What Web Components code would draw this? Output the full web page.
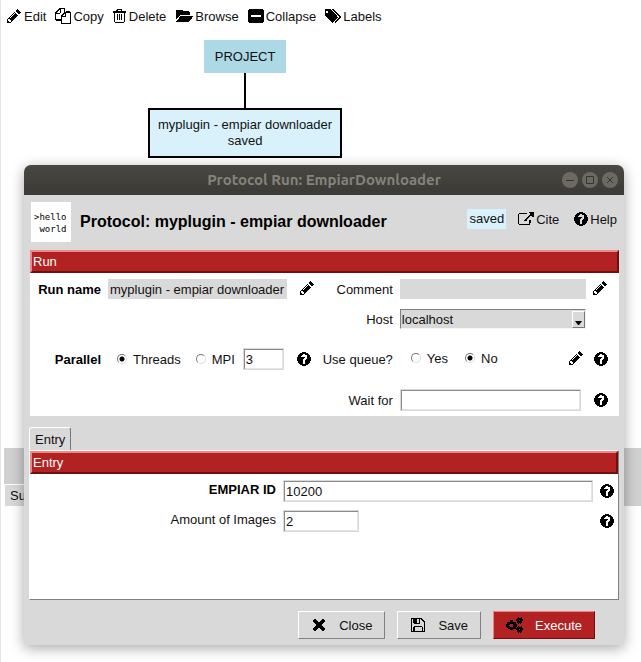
<!DOCTYPE html>
<html lang="en">
<head>
<meta charset="utf-8">
<title>Protocol Run: EmpiarDownloader</title>
<style>
html,body{margin:0;height:100%}
body{font:13px/15px "Liberation Sans",Arial,sans-serif;color:#111;background:#fff;overflow:hidden}
</style>
</head>
<body>
<project-page></project-page>
<script>
const PATHS = {
pencil:['0 0 1792 1792','M491 1536l91-91-235-235-91 91v107h128v128h107zm523-928q0-22-22-22-10 0-17 7l-542 542q-7 7-7 17 0 22 22 22 10 0 17-7l542-542q7-7 7-17zm-54-192l416 416-832 832h-416v-416zm683 96q0 53-37 90l-166 166-416-416 166-165q36-38 90-38 53 0 91 38l235 234q37 39 37 91z'],
help:['128 128 1536 1536','M1024 1376v-192q0-14-9-23t-23-9h-192q-14 0-23 9t-9 23v192q0 14 9 23t23 9h192q14 0 23-9t9-23zm256-672q0-88-55.500-163t-138.500-116-170-41q-243 0-371 213-15 24 8 42l132 100q7 6 19 6 16 0 25-12 53-68 86-92 34-24 86-24 48 0 85.500 26t37.500 59q0 38-20 61t-68 45q-63 28-115.500 86.500t-52.500 125.500v36q0 14 9 23t23 9h192q14 0 23-9t9-23q0-19 21.500-49.500t54.500-49.500q32-18 49-28.500t46-35 44.500-48 28-60.500 12.500-81zm384 192q0 209-103 385.500t-279.500 279.500-385.500 103-385.500-103-279.500-279.500-103-385.500 103-385.500 279.500-279.500 385.500-103 385.500 103 279.500 279.500 103 385.500z'],
link:['0 64 1792 1536','M1408 928v320q0 119-84.500 203.500t-203.500 84.500h-832q-119 0-203.500-84.500t-84.500-203.500v-832q0-119 84.500-203.500t203.500-84.500h704q14 0 23 9t9 23v64q0 14-9 23t-23 9h-704q-66 0-113 47t-47 113v832q0 66 47 113t113 47h832q66 0 113-47t47-113v-320q0-14 9-23t23-9h64q14 0 23 9t9 23zm384-864v512q0 26-19 45t-45 19-45-19l-176-176-652 652q-10 10-23 10t-23-10l-114-114q-10-10-10-23t10-23l652-652-176-176q-19-19-19-45t19-45 45-19h512q26 0 45 19t19 45z'],
copy:['0 0 1792 1792','M1696 384q40 0 68 28t28 68v1216q0 40-28 68t-68 28h-960q-40 0-68-28t-28-68v-288h-544q-40 0-68-28t-28-68v-672q0-40 20-88t48-76l408-408q28-28 76-48t88-20h416q40 0 68 28t28 68v328q68-40 128-40h416zm-544 213l-299 299h299v-299zm-640-384l-299 299h299v-299zm196 647l316-316v-416h-384v416q0 40-28 68t-68 28h-416v640h512v-256q0-40 20-88t48-76zm956 804v-1152h-384v416q0 40-28 68t-68 28h-416v640h896z'],
trash:['192 128 1408 1536','M704 736v576q0 14-9 23t-23 9h-64q-14 0-23-9t-9-23v-576q0-14 9-23t23-9h64q14 0 23 9t9 23zm256 0v576q0 14-9 23t-23 9h-64q-14 0-23-9t-9-23v-576q0-14 9-23t23-9h64q14 0 23 9t9 23zm256 0v576q0 14-9 23t-23 9h-64q-14 0-23-9t-9-23v-576q0-14 9-23t23-9h64q14 0 23 9t9 23zm128 724v-948h-896v948q0 22 7 40.500t14.500 27 10.500 8.500h832q3 0 10.500-8.500t14.500-27 7-40.500zm-672-1076h448l-48-117q-7-9-17-11h-317q-10 2-17 11zm928 32v64q0 14-9 23t-23 9h-96v948q0 83-47 143.500t-113 60.500h-832q-66 0-113-58.500t-47-141.500v-952h-96q-14 0-23-9t-9-23v-64q0-14 9-23t23-9h309l70-167q15-37 54-63t79-26h320q40 0 79 26t54 63l70 167h309q14 0 23 9t9 23z'],
folder:['0 256 1943 1280','M1943 952q0 31-31 66l-336 396q-43 51-120.500 86.500t-143.500 35.500h-1088q-34 0-60.500-13t-26.500-43q0-31 31-66l336-396q43-51 120.500-86.500t143.500-35.500h1088q34 0 60.500 13t26.500 43zm-343-344v160h-832q-94 0-197 47.500t-164 119.500l-337 396-5 6v-985q0-92 66-158t158-66h320q92 0 158 66t66 158v32h544q92 0 158 66t66 158z'],
minus:['0 0 16 15','M2 0H14L16 2V13L14 15H2L0 13V2ZM3 6V9H13V6Z'],
tags:['0 128 1835 1536','M384 448q0-53-37.500-90.500t-90.500-37.500-90.500 37.500-37.500 90.500 37.500 90.500 90.500 37.500 90.500-37.500 37.500-90.500zm1067 576q0 53-37 90l-491 492q-39 37-91 37-53 0-90-37l-715-716q-38-37-64.500-101t-26.500-117v-416q0-52 38-90t90-38h416q53 0 117 26.500t102 64.500l715 714q37 39 37 91zm384 0q0 53-37 90l-491 492q-39 37-91 37-36 0-59-14t-53-45l470-470q37-37 37-90 0-52-37-91l-715-714q-38-38-102-64.500t-117-26.500h224q53 0 117 26.500t102 64.500l715 714q37 39 37 91z'],
save:['128 128 1536 1536','M512 1536h768v-384h-768v384zm896 0h128v-896q0-14-10-38.500t-20-34.500l-281-281q-10-10-34-20t-39-10v416q0 40-28 68t-68 28h-576q-40 0-68-28t-28-68v-416h-128v1280h128v-416q0-40 28-68t68-28h832q40 0 68 28t28 68v416zm-384-928v-320q0-13-9.500-22.500t-22.500-9.500h-192q-13 0-22.500 9.500t-9.500 22.500v320q0 13 9.500 22.500t22.500 9.500h192q13 0 22.500-9.500t9.500-22.500zm640 32v928q0 40-28 68t-68 28h-1344q-40 0-68-28t-28-68v-1344q0-40 28-68t68-28h928q40 0 88 20t76 48l280 280q28 28 48 76t20 88z'],
times:['302 366 1188 1188','M1490 1322q0 40-28 68l-136 136q-28 28-68 28t-68-28l-294-294-294 294q-28 28-68 28t-68-28l-136-136q-28-28-28-68t28-68l294-294-294-294q-28-28-28-68t28-68l136-136q28-28 68-28t68 28l294 294 294-294q28-28 68-28t68 28l136 136q28 28 28 68t-28 68l-294 294 294 294q28 28 28 68z'],
cogs:['0 0 17 16','M4 3H7V5H9L10 6V7H11V10H10V11L9 12H7V13H4V12H2L1 11V10H0V7H1V5H4ZM4 7L3 8V9L4 10H6L7 9V8L6 7ZM12 0H13V1H15V0H16V2H17V4H16V6H15V7H14V6H13V7H12V6H11V4H10V2H11V1H12ZM13 3V4H14V3ZM12 9H13V10H15V9H16V11H17V13H16V15H15V16H14V15H13V16H12V15H11V13H10V11H11V10H12ZM13 12V13H14V12Z']
};
function component(name, html, setup){
  customElements.define(name, class extends HTMLElement{
    constructor(){
      super();
      const t=document.createElement('template');
      t.innerHTML='<style>*{box-sizing:border-box}button,input,select{font:inherit;color:inherit;margin:0}</style>'+html;
      this.attachShadow({mode:'open'}).append(t.content.cloneNode(true));
    }
    connectedCallback(){ if(setup) setup(this,this.shadowRoot); }
  });
}

component('ui-icon',`<style>
:host{display:inline-flex;flex:none;width:14px;height:14px;color:#000}
:host([name=pencil]){width:16px;height:16px}
svg{width:100%;height:100%;display:block;shape-rendering:crispEdges}
</style><svg aria-hidden="true" preserveAspectRatio="none"><path fill="currentColor" fill-rule="evenodd"/></svg>`,
(el,root)=>{
  const [box,d]=PATHS[el.getAttribute('name')];
  root.querySelector('svg').setAttribute('viewBox',box);
  root.querySelector('path').setAttribute('d',d);
});

component('icon-button',`<style>
:host{display:inline-flex}
button{display:flex;align-items:center;gap:2px;padding:0;border:0;background:none;white-space:nowrap}
</style><button type="button"><slot name="icon"></slot><slot></slot></button>`,
(el,root)=>{const l=el.getAttribute('label'); if(l) root.querySelector('button').setAttribute('aria-label',l);});

component('tool-bar',`<style>
:host{display:flex;align-items:center;gap:9px;padding:8px 5px 0;height:24px;box-sizing:border-box}
.copy{width:16px;height:16px}.trash{width:13px;margin-right:1px}.folder{width:18px;height:12px}.wide{width:16px}
</style>
<icon-button><ui-icon slot="icon" name="pencil"></ui-icon>Edit</icon-button>
<icon-button><ui-icon slot="icon" class="copy" name="copy"></ui-icon>Copy</icon-button>
<icon-button><ui-icon slot="icon" class="trash" name="trash"></ui-icon>Delete</icon-button>
<icon-button><ui-icon slot="icon" class="folder" name="folder"></ui-icon>Browse</icon-button>
<icon-button><ui-icon slot="icon" class="wide" name="minus"></ui-icon>Collapse</icon-button>
<icon-button><ui-icon slot="icon" class="wide" name="tags"></ui-icon>Labels</icon-button>`);

component('protocol-graph',`<style>
:host{display:flex;padding:16px 147px}
.tree{display:flex;flex-direction:column;align-items:center;white-space:nowrap;text-align:center}
.root{background:#add8e6;padding:9px 11px;line-height:15px}
.edge{width:2px;height:35px;background:#000}
.node{background:#d9f1fa;border:2px solid #000;padding:7px 8px;line-height:16px}
</style>
<div class="tree"><div class="root">PROJECT</div><div class="edge"></div>
<div class="node">myplugin - empiar downloader<br>saved</div></div>`);

component('title-bar',`<style>
:host{display:grid;grid-template-columns:1fr auto 1fr;align-items:center;height:30px;padding:0 6px;border-radius:7px 7px 0 0;background:linear-gradient(#484741,#3b3a36);color:#85837b;box-sizing:border-box}
.t{grid-column:2;font:bold 15px/20px Ubuntu,"Noto Sans",sans-serif}
.b{justify-self:end;display:flex;gap:4px}
button{width:16px;height:16px;padding:0;border:0;border-radius:50%;background:#6b6962;display:block}
svg{display:block;width:16px;height:16px;fill:none;stroke:#35342f}
</style>
<div class="t"><slot></slot></div>
<div class="b">
<button type="button" aria-label="Minimize"><svg viewBox="0 0 16 16"><path d="M4 8.500H12"/></svg></button>
<button type="button" aria-label="Maximize"><svg viewBox="0 0 16 16"><path d="M4.500 4.500H11.500V11.500H4.500Z"/></svg></button>
<button type="button" aria-label="Close"><svg viewBox="0 0 16 16"><path d="M5 5L11 11M11 5L5 11"/></svg></button>
</div>`);

component('protocol-header',`<style>
:host{display:flex;align-items:center;padding:7px 7px 6px 7px}
.logo{width:40px;height:40px;background:#fff;font:9px/12px "DejaVu Sans Mono",monospace;color:#000;padding:9px 0 0 3px;white-space:pre;flex:none}
h1{font-size:16px;line-height:20px;margin:0 0 0 9px;flex:1;color:#000;white-space:nowrap}
.side{display:flex;gap:12px;align-items:center;padding-bottom:6px}
.saved{background:#d9f1fa;padding:2px;line-height:16px}
.acts{display:flex;gap:15px;align-items:center}
a{color:inherit;text-decoration:none;display:flex;align-items:center;gap:2px}
</style>
<div class="logo">&gt;hello
 world</div>
<h1>Protocol: myplugin - empiar downloader</h1>
<div class="side"><span class="saved">saved</span>
<div class="acts"><a href="#cite"><ui-icon name="link" style="width:16px"></ui-icon>Cite</a><a href="#help"><ui-icon name="help"></ui-icon>Help</a></div></div>`);

component('form-section',`<style>
:host{display:block;background:#fff}
h2{margin:0;font:inherit;line-height:19px;color:#fff;background:#b22222;border:2px solid;border-color:#f08888 #6e1010 #6e1010 #f08888;padding:0 1px}
</style><h2></h2><slot></slot>`,
(el,root)=>{root.querySelector('h2').textContent=el.getAttribute('heading');});

const FIELD=`<style>
input.t{width:100%;height:22px;padding:0 2px;background:#fff;border:1px solid #d9d9d9;border-radius:0;box-shadow:inset 1px 1px #8c8c8c,inset -1px -1px #e4e4e4;outline:0;min-width:0}
input.flat{width:100%;height:20px;padding:0 2px;border:0;border-radius:0;background:#d9d9d9;outline:0;min-width:0}
label.l{text-align:right;white-space:nowrap}
.b{font-weight:bold;color:#000}
</style>`;

component('run-form',FIELD+`<style>
:host{display:grid;grid-template-columns:71px minmax(0,179fr) 28px 78px minmax(0,186fr) 22px;grid-template-rows:30px 30px 50px 32px;align-items:center;column-gap:0;padding:1px 11px 0 0;box-sizing:border-box;height:143px}
.f{margin-left:7px;display:flex;align-items:center}
.ic{display:flex;justify-content:flex-end}
.sel{position:relative}
select{appearance:none;width:100%;height:20px;padding:0 16px 0 1px;border:1px solid;border-color:#808080 #f4f4f4 #f4f4f4 #808080;border-radius:0;background:#d9d9d9;outline:0}
.arrow{position:absolute;right:1px;top:2px;width:13px;height:17px;border:1px solid;border-color:#fff #777 #777 #fff;background:#d9d9d9;pointer-events:none}
.arrow svg{display:block;width:11px;height:15px}
.r{display:flex;align-items:center;gap:6px;white-space:nowrap}
input[type=radio]{appearance:none;width:10px;height:10px;border:1px solid;border-color:#777 #ddd #ddd #777;border-radius:50%;background:#fff}
input[type=radio]:checked{background:radial-gradient(circle,#000 2px,#fff 3px)}
.par{margin-left:16px;margin-right:3px}
.par .r+.r{margin-left:15px}
.par .t{width:41px;margin-left:auto}
.one{padding-right:4px}
.q{margin-left:18px;gap:17px}
.q icon-button{margin-left:auto;margin-right:2px}
.wait{padding-right:5px}
.q,.pen{padding-bottom:2px}
</style>
<label class="l b" for="name">Run name</label><div class="f"><input class="flat" id="name" value="myplugin - empiar downloader"></div>
<div class="ic pen"><icon-button label="Edit run name"><ui-icon slot="icon" name="pencil"></ui-icon></icon-button></div>
<label class="l" for="comment">Comment</label><div class="f"><input class="flat" id="comment"></div>
<div class="ic pen"><icon-button label="Edit comment"><ui-icon slot="icon" name="pencil"></ui-icon></icon-button></div>
<label class="l" for="host" style="grid-column:4">Host</label><div class="f sel"><select id="host"><option>localhost</option></select><span class="arrow"><svg viewBox="0 0 11 15"><path d="M2 9H9L6 13H5Z"/></svg></span></div><span></span>
<span class="l b" style="text-align:right">Parallel</span><div class="f par"><label class="r"><input type="radio" name="par" checked>Threads</label><label class="r"><input type="radio" name="par">MPI</label><input class="t" aria-label="Number of threads" value="3"></div>
<div class="ic one"><icon-button label="Help on parallel"><ui-icon slot="icon" name="help"></ui-icon></icon-button></div>
<span style="text-align:right">Use queue?</span><div class="f q"><label class="r"><input type="radio" name="q">Yes</label><label class="r"><input type="radio" name="q" checked>No</label><icon-button label="Edit queue"><ui-icon slot="icon" name="pencil"></ui-icon></icon-button></div>
<div class="ic"><icon-button label="Help on queue"><ui-icon slot="icon" name="help"></ui-icon></icon-button></div>
<label class="l" for="wait" style="grid-column:4">Wait for</label><div class="f wait"><input class="t" id="wait"></div>
<div class="ic"><icon-button label="Help on wait for"><ui-icon slot="icon" name="help"></ui-icon></icon-button></div>`);

component('entry-form',FIELD+`<style>
:host{display:grid;grid-template-columns:minmax(0,246fr) minmax(0,310fr) 14px;gap:8px 7px;padding:6px 4px 67px 0;align-items:center}
label.l{padding-bottom:4px}
.n{width:76px!important}
</style>
<label class="l b" for="id">EMPIAR ID</label><input class="t" id="id" value="10200"><icon-button label="Help on EMPIAR ID"><ui-icon slot="icon" name="help"></ui-icon></icon-button>
<label class="l" for="amount">Amount of Images</label><input class="t n" id="amount" value="2"><icon-button label="Help on amount of images"><ui-icon slot="icon" name="help"></ui-icon></icon-button>`);

component('tab-panel',`<style>
:host{display:block;padding:11px 5px 0}
button{display:block;height:23px;padding:0 5px;border:1px solid;border-color:#fff #777 transparent #fff;border-bottom:0;border-radius:3px 3px 0 0;background:#d9d9d9}
.body{border:1px solid;border-color:#fff #808080 #808080 #fff;background:#fff}
</style><div role="tablist"><button type="button" role="tab" aria-selected="true">Entry</button></div><div class="body" role="tabpanel"><slot></slot></div>`);

component('action-button',`<style>
:host{display:inline-flex}
button{display:flex;align-items:center;gap:12px;height:28px;padding:0 12px;border:1px solid;border-color:#fff #808080 #808080 #fff;background:#d9d9d9;border-radius:0}
:host([primary]) button{background:#b22222;color:#fff;border-color:#f08080 #6e1010 #6e1010 #f08080}
</style><button type="button"><slot name="icon"></slot><slot></slot></button>`);

component('run-window',`<style>
:host{display:block;background:#d9d9d9;border-radius:8px 8px 0 0;box-shadow:0 3px 14px rgba(0,0,0,.35)}
.run{margin:2px 5px 0 6px}
footer{display:flex;justify-content:flex-end;gap:12px;padding:11px 29px 6px}
.x{width:12px;height:12px;margin:0 2px}
.save{margin:0 1px}
</style>
<title-bar>Protocol Run: EmpiarDownloader</title-bar>
<protocol-header></protocol-header>
<form-section class="run" heading="Run"><run-form></run-form></form-section>
<tab-panel><form-section heading="Entry"><entry-form></entry-form></form-section></tab-panel>
<footer>
<action-button><ui-icon class="x" slot="icon" name="times"></ui-icon>Close</action-button>
<action-button><ui-icon class="save" slot="icon" name="save"></ui-icon>Save</action-button>
<action-button primary><ui-icon slot="icon" name="cogs" style="width:17px;height:16px"></ui-icon>Execute</action-button>
</footer>`);

component('project-page',`<style>
:host{display:flex;flex-direction:column;min-height:100vh;border-left:1px solid #e5e5e5;position:relative;box-sizing:border-box}
protocol-graph{height:424px;box-sizing:border-box}
.strip{height:58px;margin-left:3px;background:#d0d0d0;display:flex;align-items:flex-end}
.strip button{height:22px;padding:0 5px;border:1px solid;border-color:#fff #999 #d9d9d9 #fff;border-bottom:0;background:#d9d9d9;border-radius:0}
run-window{position:absolute;left:23px;right:17px;top:165px}
</style>
<tool-bar></tool-bar><protocol-graph></protocol-graph>
<div class="strip"><button type="button">Su</button></div>
<run-window></run-window>`);
</script>
</body>
</html>
